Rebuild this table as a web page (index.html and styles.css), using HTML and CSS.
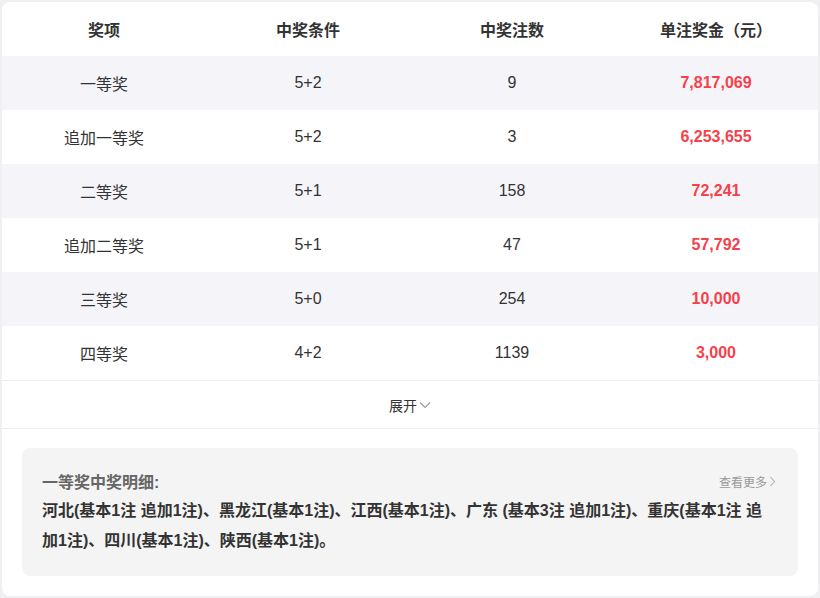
FILE: index.html
```html
<!DOCTYPE html>
<html lang="zh">
<head>
<meta charset="utf-8">
<link rel="stylesheet" href="styles.css">
</head>
<body>
<div class="card">
  <div class="table">
    <div class="row head">
      <div class="cell">奖项</div>
      <div class="cell">中奖条件</div>
      <div class="cell">中奖注数</div>
      <div class="cell">单注奖金（元）</div>
    </div>
    <div class="row stripe">
      <div class="cell">一等奖</div><div class="cell">5+2</div><div class="cell">9</div><div class="cell money">7,817,069</div>
    </div>
    <div class="row">
      <div class="cell">追加一等奖</div><div class="cell">5+2</div><div class="cell">3</div><div class="cell money">6,253,655</div>
    </div>
    <div class="row stripe">
      <div class="cell">二等奖</div><div class="cell">5+1</div><div class="cell">158</div><div class="cell money">72,241</div>
    </div>
    <div class="row">
      <div class="cell">追加二等奖</div><div class="cell">5+1</div><div class="cell">47</div><div class="cell money">57,792</div>
    </div>
    <div class="row stripe">
      <div class="cell">三等奖</div><div class="cell">5+0</div><div class="cell">254</div><div class="cell money">10,000</div>
    </div>
    <div class="row">
      <div class="cell">四等奖</div><div class="cell">4+2</div><div class="cell">1139</div><div class="cell money">3,000</div>
    </div>
  </div>
  <div class="expand">展开<svg class="chev-down" width="12" height="8" viewBox="0 0 12 8"><path d="M1 1.5 L6 6.5 L11 1.5" fill="none" stroke="#999" stroke-width="1.1"/></svg></div>
  <div class="detail">
    <div class="detail-head">
      <span class="detail-title">一等奖中奖明细:</span>
      <span class="more">查看更多<svg width="7" height="11" viewBox="0 0 7 11"><path d="M1.5 1 L5.5 5.5 L1.5 10" fill="none" stroke="#b0b0b0" stroke-width="1.1"/></svg></span>
    </div>
    <div class="detail-text">河北(基本1注 追加1注)、黑龙江(基本1注)、江西(基本1注)、广东 (基本3注 追加1注)、重庆(基本1注 追加1注)、四川(基本1注)、陕西(基本1注)。</div>
  </div>
</div>
</body>
</html>
```

FILE: styles.css
```css
html, body {
  margin: 0;
  padding: 0;
  background: #f0f0f2;
}
body {
  padding: 2px;
  font-family: "Liberation Sans", Arial, "Noto Sans CJK SC", sans-serif;
  color: #333;
}
.card {
  background: #fff;
  border-radius: 8px;
  height: 594px;
  box-sizing: border-box;
  overflow: hidden;
}
.row {
  display: grid;
  grid-template-columns: repeat(4, 1fr);
  height: 54px;
  align-items: center;
  font-size: 16px;
}
.row.stripe {
  background: #f5f5f9;
}
.cell {
  text-align: center;
}
.head .cell {
  font-weight: bold;
  color: #333;
}
.money {
  color: #f5414a;
  font-weight: bold;
}
.expand {
  border-top: 1px solid #eeeeee;
  border-bottom: 1px solid #eeeeee;
  height: 47px;
  display: flex;
  align-items: center;
  justify-content: center;
  font-size: 14px;
  color: #333;
}
.chev-down {
  margin-left: 2px;
  margin-top: 1px;
}
.detail {
  margin: 19px 20px 0;
  background: #f4f4f4;
  border-radius: 8px;
  padding: 18px 20px 20px;
  height: 128px;
  box-sizing: border-box;
}
.detail-head {
  display: flex;
  justify-content: space-between;
  align-items: center;
  height: 30px;
}
.detail-title {
  font-size: 16px;
  font-weight: bold;
  color: #666;
}
.more {
  font-size: 12px;
  color: #999;
  display: flex;
  align-items: center;
  gap: 2px;
  margin-right: 2px;
}
.detail-text {
  font-size: 16px;
  font-weight: bold;
  line-height: 30px;
  color: #333;
}
```
